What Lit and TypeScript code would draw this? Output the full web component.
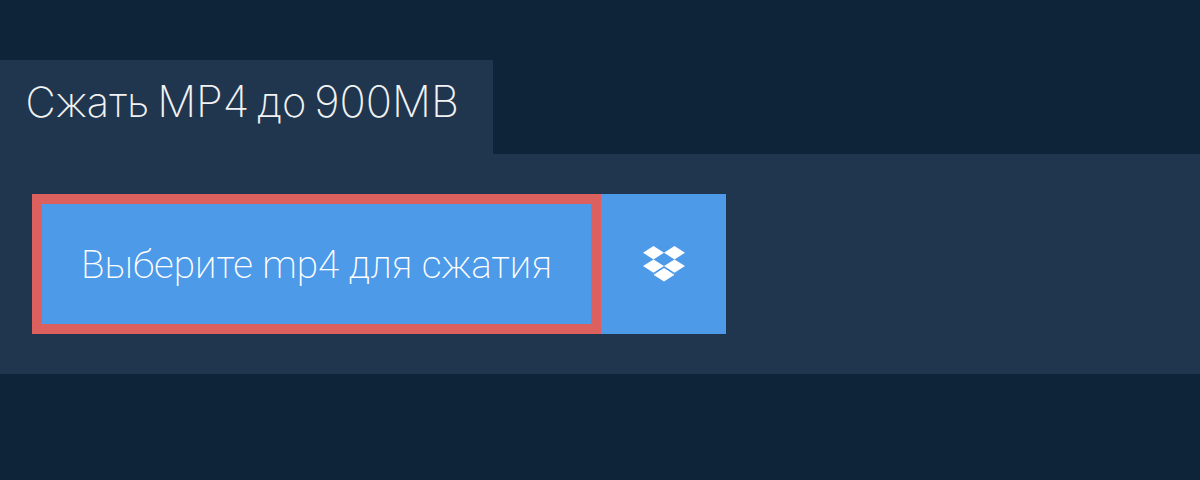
import { LitElement, html, css } from "lit";
import { customElement } from "lit/decorators.js";

@customElement("app-root")
export class AppRoot extends LitElement {
  static styles = css`
    :host {
      display: block;
      width: 1200px;
      height: 480px;
      background: #0e2539;
      overflow: hidden;
    }
    .wrap {
      padding-top: 60px;
      display: flex;
      flex-direction: column;
      align-items: flex-start;
    }
    .tab {
      height: 94px;
      box-sizing: border-box;
      width: 493px;
      padding: 13px 0 0 25.5px;
      background: #20364f;
      color: #f2f2f2;
      font-family: Inter, sans-serif;
      font-weight: 200;
      font-size: 41.6px;
      line-height: 56px;
      word-spacing: -3.8px;
      white-space: nowrap;
    }
    .lat {
      font-size: 43.4px;
    }
    .panel {
      align-self: stretch;
      background: #20364f;
      padding: 40px 32px;
      display: flex;
    }
    .pick {
      box-sizing: border-box;
      width: 569px;
      height: 140px;
      border: 10px solid #dc605e;
      background: #4d9ae9;
      color: #fff;
      font-family: Roboto, sans-serif;
      font-weight: 220;
      font-size: 38.7px;
      display: flex;
      align-items: center;
      justify-content: center;
      white-space: nowrap;
    }
    .drop {
      width: 125px;
      height: 140px;
      background: #4d9ae9;
      display: flex;
      align-items: center;
      justify-content: center;
    }
    svg {
      display: block;
      width: 42px;
      height: 36px;
      fill: #fff;
    }
  `;

  render() {
    return html`
      <div class="wrap">
        <div class="tab">Сжать <span class="lat">MP4</span> до <span class="lat">900MB</span></div>
        <div class="panel">
          <div class="pick">Выберите mp4 для сжатия</div>
          <div class="drop">
            <svg viewBox="0 0 42 36">
              <path d="M10.5 0 L21 6.7 L10.5 13.4 L0 6.7 Z" />
              <path d="M31.5 0 L42 6.7 L31.5 13.4 L21 6.7 Z" />
              <path d="M10.5 13.4 L21 20.1 L10.5 26.8 L0 20.1 Z" />
              <path d="M31.5 13.4 L42 20.1 L31.5 26.8 L21 20.1 Z" />
              <path d="M21 22 L31.5 28.7 L21 35.4 L10.5 28.7 Z" />
            </svg>
          </div>
        </div>
      </div>
    `;
  }
}
